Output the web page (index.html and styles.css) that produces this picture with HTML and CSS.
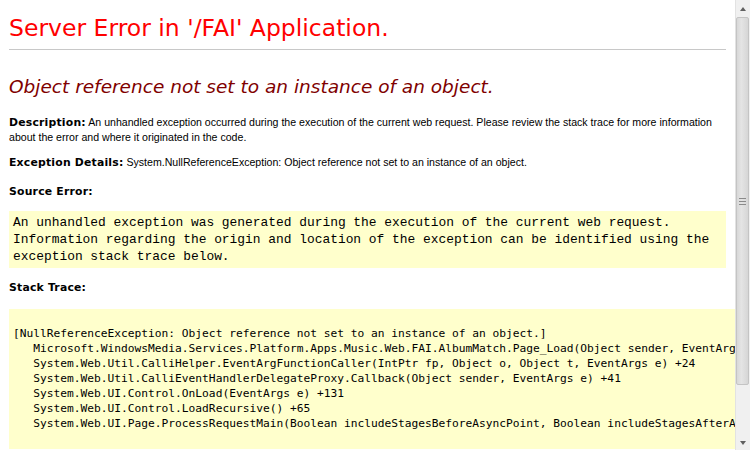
FILE: index.html
```html
<!DOCTYPE html>
<html>
<head>
  <meta charset="UTF-8">
  <title>Object reference not set to an instance of an object.</title>
  <link rel="stylesheet" href="styles.css">
</head>
<body>

<div class="window">
  <div class="page">
    <h1>Server Error in '/FAI' Application.</h1>
    <hr class="rule">
    <h2><i>Object reference not set to an instance of an object.</i></h2>

    <p class="para para--desc"><b class="marker">Description:</b> An unhandled exception occurred during the execution of the current web request. Please review the stack trace for more information about the error and where it originated in the code.</p>

    <p class="para"><b class="marker">Exception Details:</b> System.NullReferenceException: Object reference not set to an instance of an object.</p>

    <p class="para para--source"><b class="marker">Source Error:</b></p>

    <div class="code-box code-box--source">
      <code>An unhandled exception was generated during the execution of the current web request. Information regarding the origin and location of the exception can be identified using the exception stack trace below.</code>
    </div>

    <p class="para"><b class="marker">Stack Trace:</b></p>

    <div class="code-box code-box--trace">
<pre>

[NullReferenceException: Object reference not set to an instance of an object.]
   Microsoft.WindowsMedia.Services.Platform.Apps.Music.Web.FAI.AlbumMatch.Page_Load(Object sender, EventArgs e) +36
   System.Web.Util.CalliHelper.EventArgFunctionCaller(IntPtr fp, Object o, Object t, EventArgs e) +24
   System.Web.Util.CalliEventHandlerDelegateProxy.Callback(Object sender, EventArgs e) +41
   System.Web.UI.Control.OnLoad(EventArgs e) +131
   System.Web.UI.Control.LoadRecursive() +65
   System.Web.UI.Page.ProcessRequestMain(Boolean includeStagesBeforeAsyncPoint, Boolean includeStagesAfterAsyncPoint) +627
</pre>
    </div>
  </div>

  <div class="scrollbar">
    <div class="scrollbar__arrow scrollbar__arrow--up"></div>
    <div class="scrollbar__track">
      <div class="scrollbar__thumb">
        <span class="scrollbar__grip"></span>
      </div>
    </div>
    <div class="scrollbar__arrow scrollbar__arrow--down"></div>
  </div>
</div>

</body>
</html>
```

FILE: styles.css
```css
    html, body {
      margin: 0;
      padding: 0;
    }
    *, *:before, *:after {
      box-sizing: border-box;
    }
    body {
      background-color: #ffffff;
      color: #000000;
      overflow: hidden;
    }
    .window {
      display: flex;
      flex-direction: row;
      height: 450px;
      width: 750px;
    }
    .page {
      flex: 1;
      min-width: 0;
      overflow: hidden;
      padding: 0 9px 0 9px;
    }
    h1 {
      color: #ff0000;
      font-family: "DejaVu Sans", Verdana, sans-serif;
      font-size: 23.5px;
      font-weight: normal;
      line-height: 28px;
      margin: 14px 0 0 0;
    }
    .rule {
      border: 0;
      border-top: 1px solid #c8c8c8;
      height: 0;
      margin: 7px 0 0 0;
    }
    h2 {
      color: #800000;
      font-family: "DejaVu Sans", Verdana, sans-serif;
      font-size: 18.5px;
      font-weight: normal;
      line-height: 22px;
      margin: 26px 0 0 0;
    }
    .para {
      font-family: "Liberation Sans", Arial, sans-serif;
      font-size: 10.6px;
      line-height: 14px;
      margin: 0;
    }
    .para--desc {
      margin-top: 17px;
    }
    .para + .para {
      margin-top: 11px;
    }
    .para + .para--source {
      margin-top: 14px;
    }
    .marker {
      font-family: "DejaVu Sans", Verdana, sans-serif;
      font-size: 10.85px;
      font-weight: bold;
      letter-spacing: .2px;
    }
    .code-box {
      background-color: #ffffcc;
    }
    .code-box--source {
      font-family: "Liberation Mono", "Courier New", monospace;
      font-size: 12.9px;
      line-height: 17px;
      margin: 12px 0 12px 0;
      padding: 3px 4px 3px 4px;
      width: 100%;
    }
    .code-box--source code {
      font-family: inherit;
    }
    .code-box--trace {
      margin-top: 14px;
      padding: 2px 4px 18px 4px;
      width: max-content;
      min-width: 100%;
    }
    .code-box--trace pre {
      font-family: "DejaVu Sans Mono", Consolas, monospace;
      font-size: 11.23px;
      line-height: 15px;
      margin: 0;
    }
    .scrollbar {
      background-color: #f0f0f0;
      border-left: 1px solid #e2e2e2;
      display: flex;
      flex-direction: column;
      width: 15px;
    }
    .scrollbar__arrow {
      display: flex;
      align-items: center;
      justify-content: center;
      height: 17px;
    }
    .scrollbar__arrow:before {
      content: "";
      border-left: 3px solid transparent;
      border-right: 3px solid transparent;
    }
    .scrollbar__arrow--up:before {
      border-bottom: 4px solid #606060;
    }
    .scrollbar__arrow--down {
      height: 15px;
    }
    .scrollbar__arrow--down:before {
      border-top: 4px solid #606060;
    }
    .scrollbar__track {
      flex: 1;
      padding: 0 1px 0 0;
    }
    .scrollbar__thumb {
      align-items: center;
      background: linear-gradient(90deg, #d8d8d8, #e4e4e4 40%, #d6d6d6);
      border: 1px solid #c4c4c4;
      border-radius: 2px;
      display: flex;
      height: 368px;
      justify-content: center;
    }
    .scrollbar__grip {
      border-top: 1px solid #8a8a8a;
      border-bottom: 1px solid #8a8a8a;
      height: 7px;
      position: relative;
      width: 7px;
    }
    .scrollbar__grip:after {
      content: "";
      border-top: 1px solid #8a8a8a;
      left: 0;
      position: absolute;
      right: 0;
      top: 2px;
    }
```
